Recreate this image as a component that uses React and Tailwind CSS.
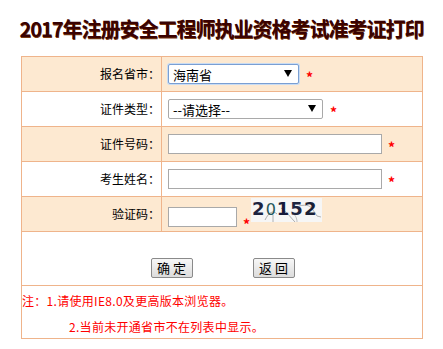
import React from "react";

const cjk = { fontFamily: '"Noto Sans CJK SC", "Noto Sans", sans-serif' };

function Star({ className = "" }) {
  return <span className={"text-[#ff0000] text-[14px] font-bold leading-none " + className}>*</span>;
}

function Select({ value, width, focused }) {
  return (
    <div
      className={
        "relative h-[20px] flex items-center pl-[4px] bg-white text-[13px] text-black rounded-[2px] " +
        (focused ? "border border-[#7a9fd3] shadow-[0_0_0_1px_#c9dcf3]" : "border border-[#a9a9a9]")
      }
      style={{ width }}
    >
      <span className="leading-none">{value}</span>
      <span className="absolute right-[6px] top-[5px] w-0 h-0 border-l-[4px] border-r-[4px] border-t-[7px] border-l-transparent border-r-transparent border-t-black" />
    </div>
  );
}

function Input({ width }) {
  return <div className="h-[20px] bg-white border border-[#a9a9a9]" style={{ width }} />;
}

function Captcha() {
  return (
    <div className="relative w-[71px] h-[24px] bg-[#f6f6f6] overflow-hidden">
      <svg width="71" height="24" viewBox="0 0 71 24" className="absolute inset-0">
        <path d="M14 22 C 18 14, 22 12, 26 16" stroke="#9a9a9a" strokeWidth="0.8" fill="none" />
        <path d="M22 24 L 22 17" stroke="#a0a0a0" strokeWidth="0.8" />
        <path d="M30 10 C 36 14, 40 20, 44 24" stroke="#9a9a9a" strokeWidth="0.8" fill="none" />
        <path d="M48 8 C 56 6, 60 8, 62 12 L 66 18 L 70 19" stroke="#a0a0a0" strokeWidth="0.8" fill="none" />
        <path d="M40 14 C 44 16, 46 20, 46 24" stroke="#b0b0b0" strokeWidth="0.8" fill="none" />
      </svg>
      <div
        className="absolute left-[1px] top-[0px] flex items-end text-[18px] font-bold leading-none tracking-[1px]"
        style={{ fontFamily: '"DejaVu Sans", sans-serif' }}
      >
        <span className="text-[#1c2340] mt-[1px]">2</span>
        <span className="text-[#24575a] mt-[3px] text-[16px] font-normal">0</span>
        <span className="text-[#151a3a] mt-[1px]">1</span>
        <span className="text-[#1d2540] mt-[2px]">5</span>
        <span className="text-[#1a1f35] mt-[1px]">2</span>
      </div>
    </div>
  );
}

function Button({ children }) {
  return (
    <div
      className="w-[42px] h-[20px] flex items-center justify-center text-[13px] text-black border border-[#8a8a8a] rounded-[2px] bg-gradient-to-b from-[#f7f7f7] to-[#dcdcdc] whitespace-pre"
      style={cjk}
    >
      {children}
    </div>
  );
}

export default function App() {
  const peach = "bg-[#fde9d1]";
  const tdL = "border border-[#efb48b] text-right pr-[1px] text-[12px] text-black align-middle";
  const tdR = "border border-[#efb48b] pl-[6px] align-middle";
  return (
    <div className="w-[443px] h-[349px] bg-white overflow-hidden" style={cjk}>
      <div className="h-[56px] flex items-center justify-center">
        <h1
          className="text-[20px] font-bold text-[#3a0202] tracking-[-1px] leading-none mt-[1px] whitespace-nowrap"
          style={{ textShadow: "0.5px 0.5px 0 #7a3a10" }}
        >
          2017年注册安全工程师执业资格考试准考证打印
        </h1>
      </div>
      <table className="mx-[21px] w-[401px] border-collapse table-fixed">
        <colgroup>
          <col className="w-[140px]" />
          <col className="w-[261px]" />
        </colgroup>
        <tbody>
          <tr className={"h-[35px] " + peach}>
            <td className={tdL}>报名省市：</td>
            <td className={tdR}>
              <div className="flex items-center gap-[7px]">
                <Select value="海南省" width={131} focused />
                <Star className="mt-[5px]" />
              </div>
            </td>
          </tr>
          <tr className="h-[35px] bg-white">
            <td className={tdL}>证件类型：</td>
            <td className={tdR}>
              <div className="flex items-center gap-[7px]">
                <Select value="--请选择--" width={155} />
                <Star className="mt-[5px]" />
              </div>
            </td>
          </tr>
          <tr className={"h-[35px] " + peach}>
            <td className={tdL}>证件号码：</td>
            <td className={tdR}>
              <div className="flex items-center gap-[6px]">
                <Input width={214} />
                <Star className="mt-[5px]" />
              </div>
            </td>
          </tr>
          <tr className="h-[35px] bg-white">
            <td className={tdL}>考生姓名：</td>
            <td className={tdR}>
              <div className="flex items-center gap-[6px]">
                <Input width={214} />
                <Star className="mt-[5px]" />
              </div>
            </td>
          </tr>
          <tr className={"h-[35px] " + peach}>
            <td className={tdL}>验证码：</td>
            <td className={tdR}>
              <div className="flex items-start">
                <div className="mt-[9px]">
                  <Input width={69} />
                </div>
                <Star className="mt-[19px] ml-[6px] mr-[1px]" />
                <Captcha />
              </div>
            </td>
          </tr>
          <tr className="h-[54px] bg-white">
            <td colSpan={2} className="border border-[#efb48b] align-top">
              <div className="flex justify-center gap-[60px] pt-[26px] pl-[1px]">
                <Button>确 定</Button>
                <Button>返 回</Button>
              </div>
            </td>
          </tr>
          <tr className="h-[53px] bg-white">
            <td colSpan={2} className="border border-[#efb48b] align-top text-[12px] text-[#ff0000] leading-none tracking-[0.3px]">
              <div className="pt-[9px]">注：1.请使用IE8.0及更高版本浏览器。</div>
              <div className="pt-[14px] pl-[47px]">2.当前未开通省市不在列表中显示。</div>
            </td>
          </tr>
        </tbody>
      </table>
    </div>
  );
}
